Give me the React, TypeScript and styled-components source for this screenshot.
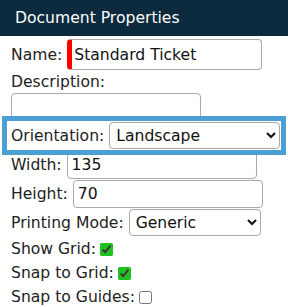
import React, { useState } from 'react';
import styled, { createGlobalStyle, css } from 'styled-components';

const GlobalStyle = createGlobalStyle`
  body {
    margin: 0;
    background: #ffffff;
    font-family: "DejaVu Sans", "Noto Sans", sans-serif;
    color: #222222;
  }
`;

const Panel = styled.div`
  width: 288px;
  height: 307px;
  overflow: hidden;
  background: #ffffff;
`;

const Header = styled.div`
  height: 36px;
  background-color: #0b2a3e;
  color: #ffffff;
  font-size: 15.6px;
  display: flex;
  align-items: center;
  padding-left: 15px;
`;

const Body = styled.div`
  padding: 3px 7px 0 11px;
  font-size: 15.6px;
`;

const Row = styled.div<{ $highlight?: boolean; $tall?: boolean }>`
  display: flex;
  align-items: center;
  gap: 5px;
  height: ${(p) => (p.$tall ? 31 : 29)}px;
  ${(p) =>
    p.$highlight &&
    css`
      position: relative;
      z-index: 1;
      background: #ffffff;
      margin: 0 0 0 -4px;
      padding-left: 4px;
      outline: 5px solid #4a9fd3;
    `}
`;

const Label = styled.label`
  white-space: nowrap;
`;

const StackLabel = styled.div`
  height: 20px;
  margin-top: 2px;
  display: flex;
  align-items: center;
`;

const TextInput = styled.input<{ $invalid?: boolean }>`
  box-sizing: border-box;
  width: 190px;
  height: 28px;
  border: 1px solid #a9a9a9;
  border-radius: 4px;
  padding: 0 4px;
  font-family: inherit;
  font-size: 15.6px;
  color: #111111;
  ${(p) =>
    p.$invalid &&
    css`
      width: 195px;
      height: 31px;
      border-left: 5px solid #ff0000;
      padding-left: 2px;
    `}
`;

const Select = styled.select<{ $width: number }>`
  box-sizing: border-box;
  width: ${(p) => p.$width}px;
  height: 27px;
  border: 1px solid #a9a9a9;
  border-radius: 4px;
  background: #ffffff;
  font-family: inherit;
  font-size: 15.6px;
  color: #111111;
  padding-left: 2px;
`;

const CheckRow = styled.div`
  display: flex;
  align-items: center;
  gap: 4px;
  height: 24px;
`;

const Check = styled.input`
  margin: 0;
  width: 13px;
  height: 13px;
  accent-color: #1fc21f;
`;

export default function App() {
  const [name, setName] = useState('Standard Ticket');
  const [description, setDescription] = useState('');
  const [orientation, setOrientation] = useState('Landscape');
  const [width, setWidth] = useState('135');
  const [height, setHeight] = useState('70');
  const [mode, setMode] = useState('Generic');
  const [showGrid, setShowGrid] = useState(true);
  const [snapGrid, setSnapGrid] = useState(true);
  const [snapGuides, setSnapGuides] = useState(false);

  return (
    <Panel>
      <GlobalStyle />
      <Header>Document Properties</Header>
      <Body>
        <Row $tall>
          <Label>Name:</Label>
          <TextInput $invalid value={name} onChange={(e) => setName(e.target.value)} />
        </Row>
        <StackLabel>Description:</StackLabel>
        <Row>
          <TextInput value={description} onChange={(e) => setDescription(e.target.value)} />
        </Row>
        <Row $highlight>
          <Label>Orientation:</Label>
          <Select $width={171} value={orientation} onChange={(e) => setOrientation(e.target.value)}>
            <option>Landscape</option>
            <option>Portrait</option>
          </Select>
        </Row>
        <Row>
          <Label>Width:</Label>
          <TextInput value={width} onChange={(e) => setWidth(e.target.value)} />
        </Row>
        <Row>
          <Label>Height:</Label>
          <TextInput value={height} onChange={(e) => setHeight(e.target.value)} />
        </Row>
        <Row>
          <Label>Printing Mode:</Label>
          <Select $width={132} value={mode} onChange={(e) => setMode(e.target.value)}>
            <option>Generic</option>
            <option>Thermal</option>
          </Select>
        </Row>
        <CheckRow>
          <Label>Show Grid:</Label>
          <Check type="checkbox" checked={showGrid} onChange={(e) => setShowGrid(e.target.checked)} />
        </CheckRow>
        <CheckRow>
          <Label>Snap to Grid:</Label>
          <Check type="checkbox" checked={snapGrid} onChange={(e) => setSnapGrid(e.target.checked)} />
        </CheckRow>
        <CheckRow>
          <Label>Snap to Guides:</Label>
          <Check type="checkbox" checked={snapGuides} onChange={(e) => setSnapGuides(e.target.checked)} />
        </CheckRow>
      </Body>
    </Panel>
  );
}
